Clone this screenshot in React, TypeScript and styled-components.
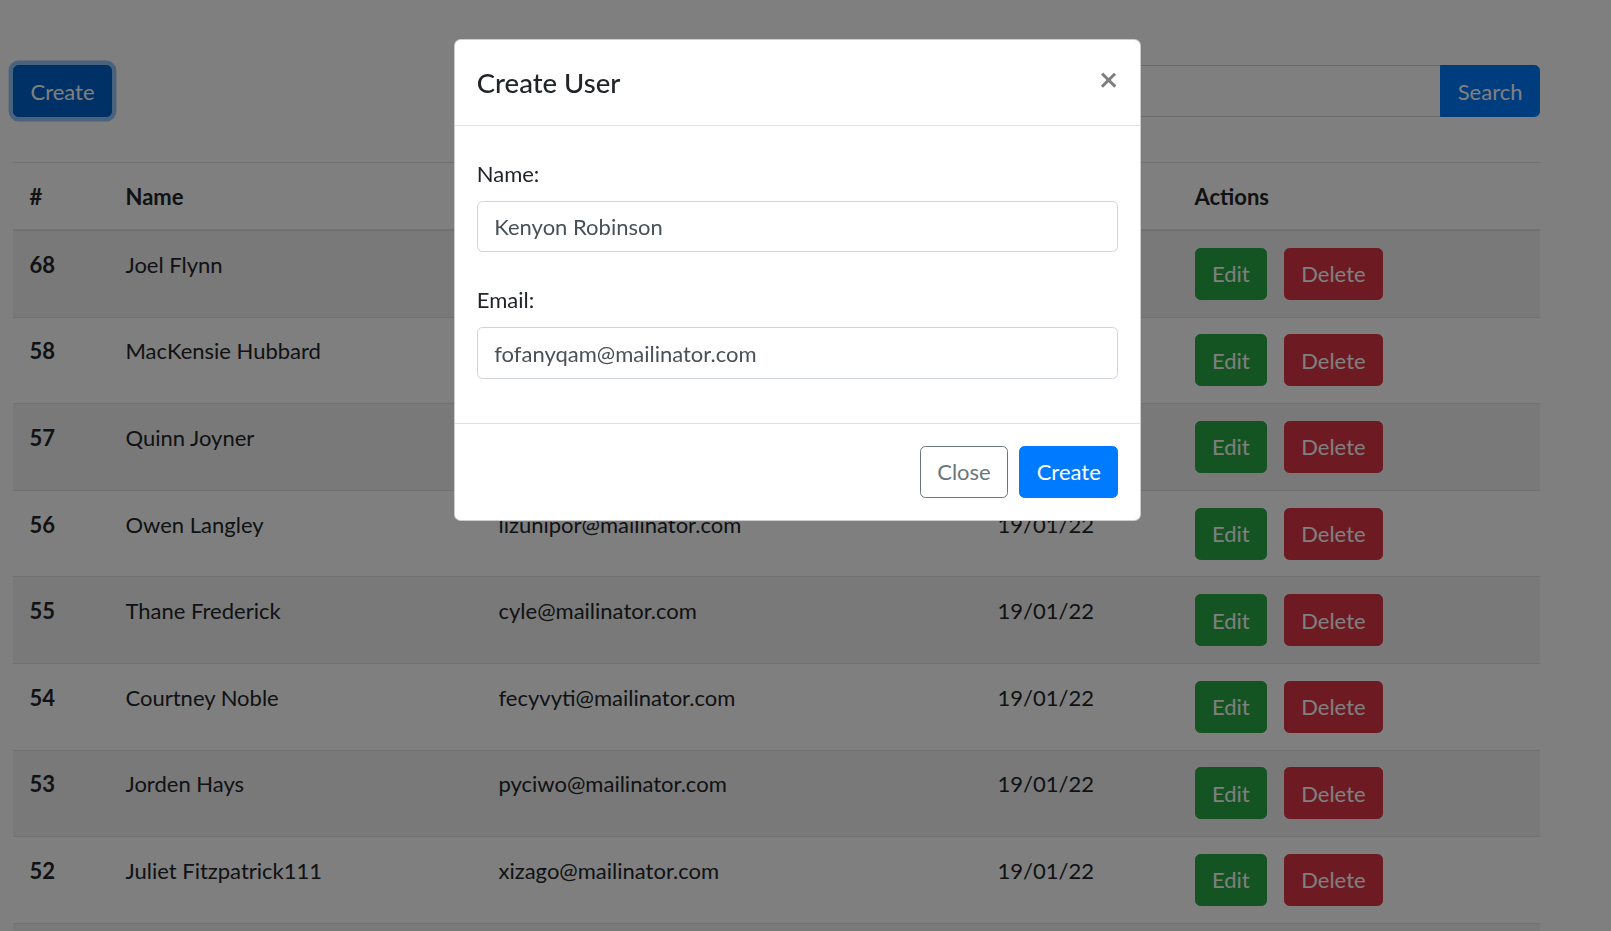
import styled, { createGlobalStyle, css } from 'styled-components';

const GlobalStyle = createGlobalStyle`
  html {
    font-size: 22px;
  }
  body {
    margin: 0;
    font-family: Lato, "Noto Sans", "Liberation Sans", sans-serif;
    font-size: 1rem;
    line-height: 1.5;
    color: #212529;
    background: #fff;
  }
  *, *::before, *::after {
    box-sizing: border-box;
  }
`;

interface IUser {
  id: number;
  name: string;
  email: string;
  date: string;
}

const users: IUser[] = [
  { id: 68, name: 'Joel Flynn', email: 'qodyxo@mailinator.com', date: '19/01/22' },
  { id: 58, name: 'MacKensie Hubbard', email: 'sicyhy@mailinator.com', date: '19/01/22' },
  { id: 57, name: 'Quinn Joyner', email: 'zolohe@mailinator.com', date: '19/01/22' },
  { id: 56, name: 'Owen Langley', email: 'lizunipor@mailinator.com', date: '19/01/22' },
  { id: 55, name: 'Thane Frederick', email: 'cyle@mailinator.com', date: '19/01/22' },
  { id: 54, name: 'Courtney Noble', email: 'fecyvyti@mailinator.com', date: '19/01/22' },
  { id: 53, name: 'Jorden Hays', email: 'pyciwo@mailinator.com', date: '19/01/22' },
  { id: 52, name: 'Juliet Fitzpatrick111', email: 'xizago@mailinator.com', date: '19/01/22' },
  { id: 51, name: 'Hedy Greer', email: 'bosyvo@mailinator.com', date: '19/01/22' },
];

const App = () => {
  return (
    <>
      <GlobalStyle />
      <Page>
        <Toolbar>
          <Button $variant="primary" $focused>
            Create
          </Button>
          <SearchGroup>
            <SearchInput type="text" />
            <SearchButton $variant="primary">Search</SearchButton>
          </SearchGroup>
        </Toolbar>

        <Table>
          <colgroup>
            <col style={{ width: 96 }} />
            <col style={{ width: 373 }} />
            <col style={{ width: 499 }} />
            <col style={{ width: 197 }} />
            <col />
          </colgroup>
          <thead>
            <tr>
              <Th>#</Th>
              <Th>Name</Th>
              <Th>Email</Th>
              <Th>Created</Th>
              <Th>Actions</Th>
            </tr>
          </thead>
          <tbody>
            {users.map((u, i) => (
              <Tr key={u.id} $striped={i % 2 === 0}>
                <RowHead>{u.id}</RowHead>
                <Td>{u.name}</Td>
                <Td>{u.email}</Td>
                <Td>{u.date}</Td>
                <Td>
                  <Actions>
                    <Button $variant="success">Edit</Button>
                    <Button $variant="danger">Delete</Button>
                  </Actions>
                </Td>
              </Tr>
            ))}
          </tbody>
        </Table>
      </Page>

      <Backdrop />
      <ModalWrap>
        <Dialog>
          <ModalHeader>
            <ModalTitle>Create User</ModalTitle>
            <CloseX type="button" aria-label="Close">
              ×
            </CloseX>
          </ModalHeader>
          <ModalBody>
            <FormGroup>
              <Label>Name:</Label>
              <Input type="text" defaultValue="Kenyon Robinson" />
            </FormGroup>
            <FormGroup>
              <Label>Email:</Label>
              <Input type="email" defaultValue="fofanyqam@mailinator.com" />
            </FormGroup>
          </ModalBody>
          <ModalFooter>
            <Button $variant="outline">Close</Button>
            <Button $variant="primary">Create</Button>
          </ModalFooter>
        </Dialog>
      </ModalWrap>
    </>
  );
};

export default App;

type Variant = 'primary' | 'success' | 'danger' | 'outline';

const variants: Record<Variant, ReturnType<typeof css>> = {
  primary: css`
    color: #fff;
    background: #007bff;
    border-color: #007bff;
  `,
  success: css`
    color: #fff;
    background: #28a745;
    border-color: #28a745;
  `,
  danger: css`
    color: #fff;
    background: #dc3545;
    border-color: #dc3545;
  `,
  outline: css`
    color: #6c757d;
    background: #fff;
    border-color: #6c757d;
  `,
};

const Page = styled.div`
  width: 1527px;
  margin-left: 13px;
  padding-top: 65px;
`;

const Toolbar = styled.div`
  display: flex;
  justify-content: space-between;
  align-items: flex-start;
  margin-bottom: 45px;
`;

const Button = styled.button<{ $variant: Variant; $focused?: boolean }>`
  display: inline-block;
  font-family: inherit;
  font-size: 1rem;
  line-height: 1.5;
  font-weight: 400;
  padding: 8.5px 0.75rem;
  border: 1px solid transparent;
  border-radius: 0.25rem;
  cursor: pointer;
  ${(p) => variants[p.$variant]}
  ${(p) =>
    p.$focused &&
    css`
      background: #0062cc;
      border-color: #005cbf;
      box-shadow: 0 0 0 0.2rem rgba(38, 143, 255, 0.5);
    `}
`;

const SearchGroup = styled.div`
  display: flex;
  width: 740px;
`;

const SearchInput = styled.input`
  flex: 1;
  height: 52px;
  font-family: inherit;
  font-size: 1rem;
  padding: 0.375rem 0.75rem;
  border: 1px solid #ced4da;
  border-right: none;
  border-radius: 0.25rem 0 0 0.25rem;
  color: #495057;
`;

const SearchButton = styled(Button)`
  border-radius: 0 0.25rem 0.25rem 0;
`;

const Table = styled.table`
  width: 100%;
  border-collapse: collapse;
  table-layout: fixed;
`;

const Th = styled.th`
  text-align: left;
  font-weight: 700;
  padding: 0.75rem;
  vertical-align: bottom;
  border-top: 1px solid #dee2e6;
  border-bottom: 2px solid #dee2e6;
`;

const Tr = styled.tr<{ $striped: boolean }>`
  background: ${(p) => (p.$striped ? 'rgba(0, 0, 0, 0.05)' : 'transparent')};
`;

const Td = styled.td`
  padding: 16.8px 0.75rem;
  vertical-align: top;
  border-top: 1px solid #dee2e6;
  white-space: nowrap;
`;

const RowHead = styled(Td).attrs({ as: 'th' })`
  text-align: left;
  font-weight: 700;
`;

const Actions = styled.div`
  display: flex;
  gap: 16.5px;
`;

const Backdrop = styled.div`
  position: fixed;
  inset: 0;
  background: rgba(0, 0, 0, 0.5);
  z-index: 40;
`;

const ModalWrap = styled.div`
  position: fixed;
  inset: 0;
  z-index: 50;
  display: flex;
  justify-content: center;
  align-items: flex-start;
  padding: 38.5px 16px 0 0;
`;

const Dialog = styled.div`
  width: 687.5px;
  background: #fff;
  border: 1px solid rgba(0, 0, 0, 0.2);
  border-radius: 0.3rem;
  display: flex;
  flex-direction: column;
`;

const ModalHeader = styled.div`
  display: flex;
  align-items: flex-start;
  justify-content: space-between;
  padding: 1rem;
  border-bottom: 1px solid #dee2e6;
`;

const ModalTitle = styled.h5`
  margin: 0;
  font-size: 1.25rem;
  font-weight: 500;
  line-height: 1.5;
`;

const CloseX = styled.button`
  margin: -1rem -1rem -1rem auto;
  padding: 1rem;
  background: transparent;
  border: 0;
  font-family: inherit;
  font-size: 1.5rem;
  font-weight: 700;
  line-height: 1;
  color: #000;
  opacity: 0.5;
  cursor: pointer;
`;

const ModalBody = styled.div`
  display: flex;
  flex-direction: column;
  gap: 31px;
  padding: 31px 1rem 44px;
`;

const FormGroup = styled.div`
  display: flex;
  flex-direction: column;
  align-items: flex-start;
`;

const Label = styled.label`
  margin-bottom: 0.5rem;
`;

const Input = styled.input`
  display: block;
  width: 100%;
  height: calc(1.5em + 0.75rem + 2px);
  padding: 0.375rem 0.75rem;
  font-family: inherit;
  font-size: 1rem;
  line-height: 1.5;
  color: #495057;
  background: #fff;
  border: 1px solid #ced4da;
  border-radius: 0.25rem;
`;

const ModalFooter = styled.div`
  display: flex;
  justify-content: flex-end;
  align-items: center;
  padding: 0.75rem;
  border-top: 1px solid #dee2e6;

  & > button {
    margin: 0.25rem;
  }
`;
